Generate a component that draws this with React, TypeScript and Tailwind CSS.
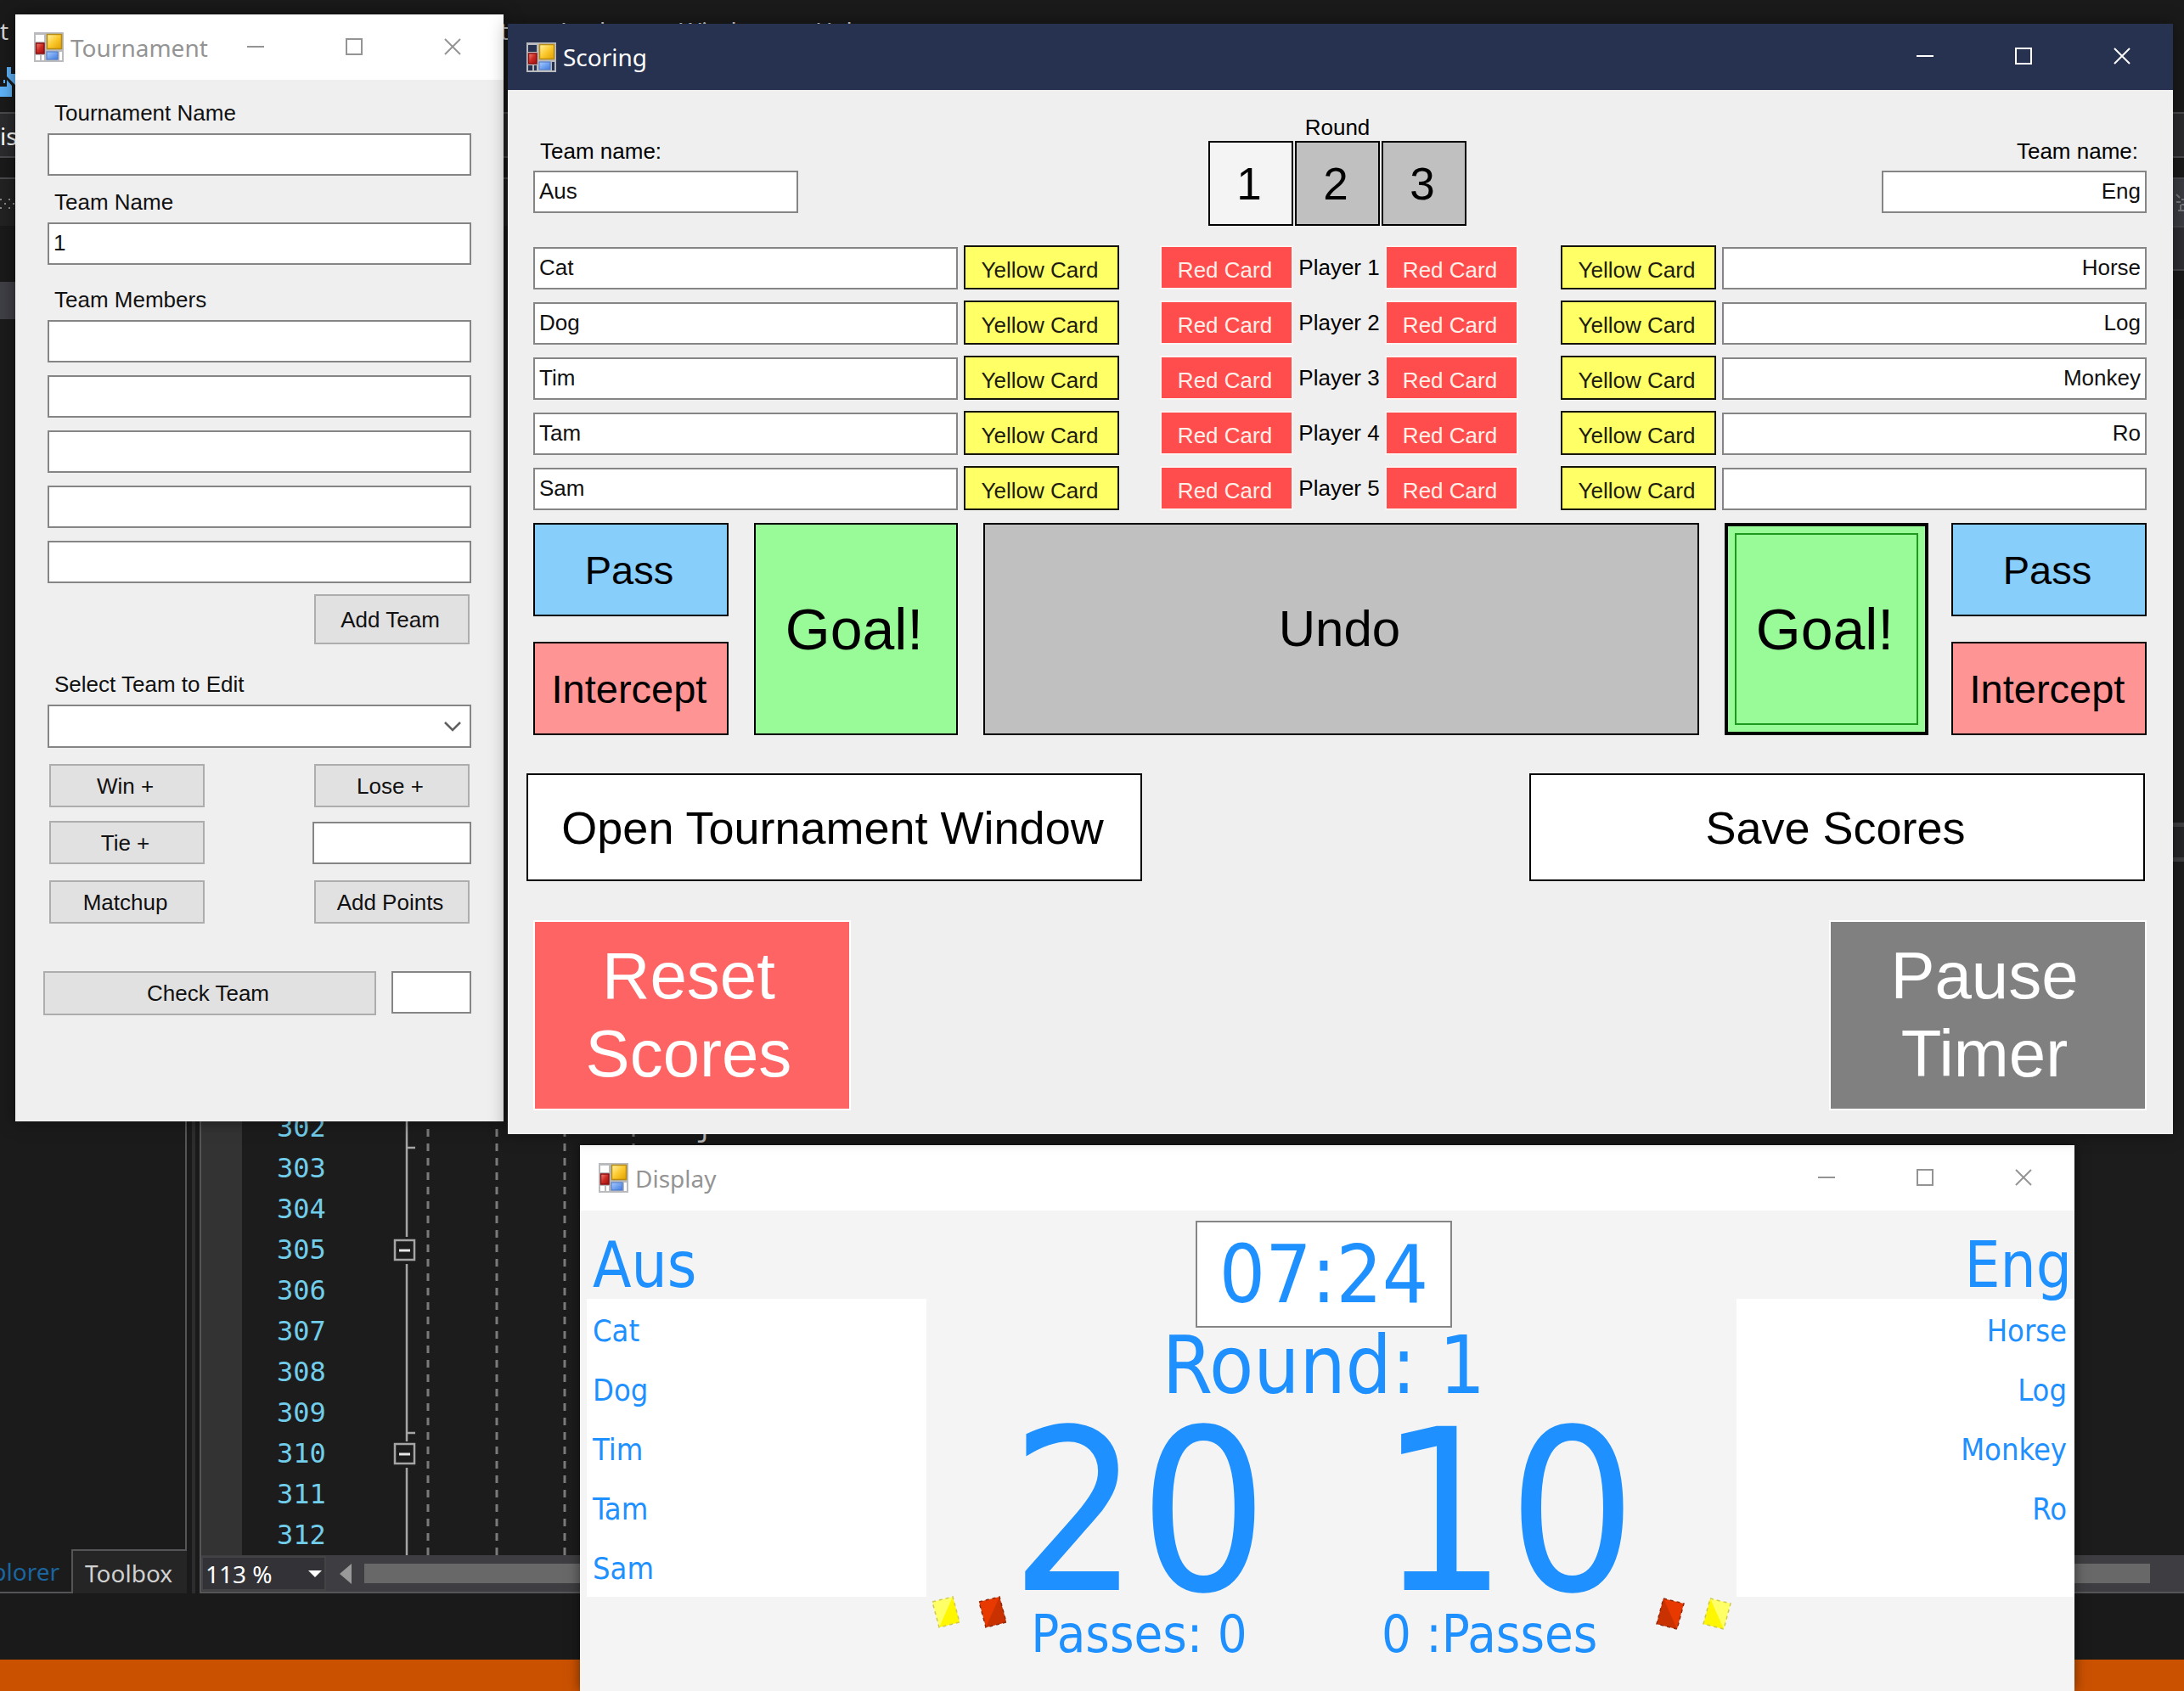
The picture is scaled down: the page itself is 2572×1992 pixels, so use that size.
import React from "react";

const UI = "font-['Liberation_Sans',Arial,sans-serif]";
const TITLE = "font-['Noto_Sans','Open_Sans',sans-serif]";
const BOARD = "font-['DejaVu_Sans_Condensed','Noto_Sans',sans-serif]";

/* ---------- window chrome ---------- */

function FormIcon({ id, hole }: { id: string; hole: string }) {
  return (
    <svg viewBox="0 0 35 35" className="h-[35px] w-[35px] shrink-0" aria-hidden="true">
      <defs>
        <linearGradient id={`${id}-y`} x1="0" y1="0" x2="1" y2="1">
          <stop offset="0" stopColor="#fff3a8" />
          <stop offset="0.5" stopColor="#fbc92e" />
          <stop offset="1" stopColor="#e0a000" />
        </linearGradient>
        <linearGradient id={`${id}-r`} x1="0" y1="0" x2="1" y2="1">
          <stop offset="0" stopColor="#f28b80" />
          <stop offset="0.5" stopColor="#cc2a22" />
          <stop offset="1" stopColor="#9b0f0f" />
        </linearGradient>
        <linearGradient id={`${id}-b`} x1="0" y1="0" x2="1" y2="1">
          <stop offset="0" stopColor="#a9ccff" />
          <stop offset="1" stopColor="#3f7be0" />
        </linearGradient>
      </defs>
      <rect width="35" height="35" fill="#b9bbbf" />
      <rect x="2" y="3" width="10" height="8" fill={hole} />
      <rect x="2" y="27" width="5" height="6" fill={hole} />
      <rect x="9" y="27" width="3" height="6" fill={hole} />
      <rect x="30" y="23" width="3" height="10" fill={hole} />
      <rect x="15.5" y="2.5" width="17" height="17" fill={`url(#${id}-y)`} stroke="#b88a10" strokeWidth="1.5" />
      <rect x="2.5" y="13" width="9.5" height="12" fill={`url(#${id}-r)`} stroke="#8d1010" strokeWidth="1.5" />
      <rect x="15" y="23" width="13" height="9" fill={`url(#${id}-b)`} stroke="#4a78c8" strokeWidth="1" />
    </svg>
  );
}

function CaptionButton({ label, d }: { label: string; d: string }) {
  return (
    <button aria-label={label} className="flex h-[75px] w-[116px] items-center justify-center">
      <svg viewBox="0 0 20 20" className="h-5 w-5" fill="none" stroke="currentColor" strokeWidth="2" aria-hidden="true">
        <path d={d} />
      </svg>
    </button>
  );
}

function TitleBar({ id, title, active = false }: { id: string; title: string; active?: boolean }) {
  return (
    <header
      className={
        active
          ? "flex h-[78px] items-center bg-[#26324f] pl-[22px] pr-0.5 text-white"
          : "flex h-[77px] items-center bg-white pl-[22px] pr-0.5 text-[#949494]"
      }
    >
      <FormIcon id={id} hole={active ? "#26324f" : "#ffffff"} />
      <h2 className={`${TITLE} min-w-0 flex-1 whitespace-nowrap pl-2 text-[28px] leading-9`}>{title}</h2>
      <div className="flex h-full items-start">
        <CaptionButton label="Minimize" d="M0 10H20" />
        <CaptionButton label="Maximize" d="M1 1H19V19H1Z" />
        <CaptionButton label="Close" d="M1 1L19 19M19 1L1 19" />
      </div>
    </header>
  );
}

/* ---------- form controls ---------- */

function Box({ label, id, value = "", className = "" }: { label?: string; id?: string; value?: string; className?: string }) {
  return (
    <input
      id={id}
      aria-label={label}
      type="text"
      defaultValue={value}
      className={`h-[50px] min-w-0 border-2 border-[#858585] bg-white px-[5px] pb-0.5 text-[26px] text-[#111] outline-none ${className}`}
    />
  );
}

function GrayButton({ children, className = "" }: { children: React.ReactNode; className?: string }) {
  return (
    <button className={`border-2 border-[#adadad] bg-[#e1e1e1] pr-1 text-[26px] leading-8 text-[#111] ${className}`}>
      {children}
    </button>
  );
}

/* ---------- Tournament ---------- */

function Tournament() {
  return (
    <section className="absolute left-[18px] top-[17px] z-10 w-[575px] bg-[#efefef] shadow-[0_0_18px_rgba(0,0,0,0.5)]">
      <TitleBar id="tour" title="Tournament" />
      <form className={`${UI} flex flex-col pb-[125px] pl-[33px] pr-[38px] pt-[23px] text-[26px] leading-8 text-[#111]`}>
        <div className="flex flex-col pl-[5px]">
          <label htmlFor="tname" className="pl-2">Tournament Name</label>
          <Box id="tname" className="mt-2" />
          <label htmlFor="team" className="mt-[15px] pl-2">Team Name</label>
          <Box id="team" value="1" className="mt-2" />
          <h3 className="mt-[25px] pl-2">Team Members</h3>
          <div className="mt-2 flex flex-col gap-[15px]">
            {[1, 2, 3, 4, 5].map((n) => (
              <Box key={n} label={`Team member ${n}`} />
            ))}
          </div>
          <GrayButton className="mr-0.5 mt-[13px] h-[59px] w-[183px] self-end">Add Team</GrayButton>
          <label htmlFor="edit" className="mt-[31px] pl-2">Select Team to Edit</label>
          <div className="relative mt-2">
            <select id="edit" className="block h-[51px] w-full appearance-none border-2 border-[#858585] bg-white px-2 outline-none" />
            <svg viewBox="0 0 20 12" className="pointer-events-none absolute right-3 top-5 h-3 w-5" fill="none" stroke="#606060" strokeWidth="2.5" aria-hidden="true">
              <path d="M1 1L10 10L19 1" />
            </svg>
          </div>
          <div className="mt-[19px] flex justify-between px-0.5">
            <GrayButton className="h-[51px] w-[183px]">Win +</GrayButton>
            <GrayButton className="h-[51px] w-[183px]">Lose +</GrayButton>
          </div>
          <div className="mt-4 flex items-end justify-between pl-0.5">
            <GrayButton className="h-[51px] w-[183px]">Tie +</GrayButton>
            <Box label="Points" className="w-[187px]" />
          </div>
          <div className="mt-[19px] flex justify-between px-0.5">
            <GrayButton className="h-[51px] w-[183px]">Matchup</GrayButton>
            <GrayButton className="h-[51px] w-[183px]">Add Points</GrayButton>
          </div>
        </div>
        <div className="mt-14 flex items-start gap-[18px]">
          <GrayButton className="h-[52px] flex-1">Check Team</GrayButton>
          <Box label="Check result" className="w-[94px]" />
        </div>
      </form>
    </section>
  );
}

/* ---------- Scoring ---------- */

const PLAYERS = [
  ["Cat", "Horse"],
  ["Dog", "Log"],
  ["Tim", "Monkey"],
  ["Tam", "Ro"],
  ["Sam", ""],
];

function Card({ kind }: { kind: "Yellow" | "Red" }) {
  return (
    <button
      className={
        kind === "Yellow"
          ? "h-[52px] w-[183px] border-2 border-[#15150a] bg-[#ffff66] pr-1 pt-1.5 text-[#1c1c10]"
          : "h-[52px] w-[157px] border-2 border-[#fcf4f2] bg-[#ff4d4d] pr-1 pt-1.5 text-[#fff0ea]"
      }
    >
      {kind} Card
    </button>
  );
}

function PassColumn() {
  return (
    <div className="flex w-[230px] flex-col justify-between text-[47px] leading-none">
      <button className="h-[110px] border-2 border-black bg-[#87cefa] pr-1">Pass</button>
      <button className="h-[110px] border-2 border-black bg-[#ff9494] pr-1">Intercept</button>
    </div>
  );
}

function Scoring() {
  return (
    <section className="absolute left-[598px] right-[13px] top-7 z-30 bg-[#efefef] shadow-[0_0_20px_rgba(0,0,0,0.4)]">
      <TitleBar id="score" title="Scoring" active />
      <div className={`${UI} pb-7 pl-[30px] pr-[31px] pt-7 text-[26px] leading-8 text-black`}>
        <div className="grid grid-cols-[1fr_auto_1fr]">
          <div className="flex flex-col items-start pt-7">
            <label htmlFor="left-team" className="pl-2">Team name:</label>
            <Box id="left-team" value="Aus" className="mt-[7px] w-[312px]" />
          </div>
          <div className="pr-1.5">
            <h3 className="text-center">Round</h3>
            <div className="flex gap-0.5 text-[53px] leading-none">
              <button className="h-[100px] w-[100px] border-2 border-black bg-[#f4f4f4] pr-1">1</button>
              <button className="h-[100px] w-[100px] border-2 border-black bg-[#c0c0c0] pr-1">2</button>
              <button className="h-[100px] w-[100px] border-2 border-black bg-[#c0c0c0] pr-1">3</button>
            </div>
          </div>
          <div className="flex flex-col items-end pt-7">
            <label htmlFor="right-team" className="pr-2.5">Team name:</label>
            <Box id="right-team" value="Eng" className="mt-[7px] w-[312px] text-right" />
          </div>
        </div>

        <div className="mt-[23px] flex flex-col gap-[13px]">
          {PLAYERS.map(([left, right], i) => (
            <div key={i} className="flex items-end">
              <Box label={`Left player ${i + 1}`} value={left} className="mr-[7px] flex-1" />
              <Card kind="Yellow" />
              <div className="flex pl-12 pr-[50px]">
                <Card kind="Red" />
                <span className="w-[108px] self-center text-center">Player {i + 1}</span>
                <Card kind="Red" />
              </div>
              <Card kind="Yellow" />
              <Box label={`Right player ${i + 1}`} value={right} className="ml-[7px] flex-1 text-right" />
            </div>
          ))}
        </div>

        <div className="mt-[15px] flex h-[250px] gap-[30px]">
          <PassColumn />
          <button className="w-[240px] border-2 border-black bg-[#98fb98] pr-1 text-[68px]">Goal!</button>
          <button className="flex-1 border-2 border-black bg-[#c0c0c0] pr-1 text-[60px]">Undo</button>
          <button className="-mr-[3px] w-[240px] border-4 border-black bg-[#98fb98] p-2 text-[68px]">
            <span className="flex h-full items-center justify-center border-2 border-[#1d9a1d] pr-1">Goal!</span>
          </button>
          <PassColumn />
        </div>

        <div className="-ml-2 mr-0.5 mt-[45px] flex justify-between text-[54px]">
          <button className="h-[127px] w-[725px] border-2 border-black bg-white pr-1">Open Tournament Window</button>
          <button className="h-[127px] w-[725px] border-2 border-black bg-white pr-1">Save Scores</button>
        </div>

        <div className="mt-[46px] flex justify-between text-[78px] leading-[92px] text-white">
          <button className="h-[224px] w-[374px] border-2 border-white bg-[#ff6464] pb-0.5 pl-8 pr-10">Reset Scores</button>
          <button className="h-[224px] w-[374px] border-2 border-white bg-[#808080] pb-0.5 pl-8 pr-10">Pause Timer</button>
        </div>
      </div>
    </section>
  );
}

/* ---------- Display ---------- */

function CardIcon({ color, mirrored = false }: { color: "yellow" | "red"; mirrored?: boolean }) {
  const [light, dark, edge] = color === "yellow" ? ["#ffff66", "#fff700", "#cfc850"] : ["#e83a00", "#c93200", "#8f2a10"];
  const outline = mirrored ? "M10 2L34 8L26 38L2 32Z" : "M2 8L26 2L34 32L10 38Z";
  const shade = mirrored ? "M10 2L2 32L26 38Z" : "M26 2L34 32L10 38Z";
  return (
    <svg viewBox="0 0 36 40" className="h-10 w-9" aria-hidden="true">
      <path d={outline} fill={light} />
      <path d={shade} fill={dark} />
      <path d={outline} fill="none" stroke={edge} strokeWidth="1.5" strokeDasharray="4 4" />
    </svg>
  );
}

function Roster({ names, right = false }: { names: string[]; right?: boolean }) {
  return (
    <ul className={`h-[351px] bg-white pl-[7px] pr-[9px] pt-[3px] text-[36px] leading-[70px] ${right ? "text-right" : ""}`}>
      {names.filter(Boolean).map((n) => (
        <li key={n} className="h-[70px]">{n}</li>
      ))}
    </ul>
  );
}

function Display() {
  return (
    <section className="absolute bottom-0 left-[683px] right-[129px] top-[1349px] z-20 overflow-hidden bg-[#f4f4f4] shadow-[0_0_14px_rgba(0,0,0,0.5)]">
      <TitleBar id="disp" title="Display" />
      <div className={`${BOARD} flex items-start pl-2 text-[#1e90ff]`}>
        <div className="w-[400px] pt-6">
          <h3 className="pl-[7px] text-[74px] leading-[80px]">Aus</h3>
          <Roster names={PLAYERS.map((p) => p[0])} />
        </div>
        <div className="flex flex-1 items-end px-[5px]">
          <div className="mb-[30px] flex w-[91px] justify-between">
            <CardIcon color="yellow" />
            <CardIcon color="red" />
          </div>
          <div className="flex flex-1 flex-col items-center pr-[18px] pt-3">
            <time className="flex h-[126px] w-[302px] items-center justify-center border-2 border-[#858585] bg-white text-[95px] leading-none">
              07:24
            </time>
            <p className="whitespace-nowrap text-[95px] leading-[88px]">Round: 1</p>
            <div className="mt-[9px] grid grid-cols-[305px_305px] gap-x-[130px]">
              <strong className="text-center text-[265px] font-normal leading-[240px]">20</strong>
              <strong className="text-[265px] font-normal leading-[240px]">10</strong>
              <span className="whitespace-nowrap text-center text-[61px] leading-[48px]">Passes: 0</span>
              <span className="whitespace-nowrap pl-[3px] text-[61px] leading-[48px]">0 :Passes</span>
            </div>
          </div>
          <div className="mb-7 flex w-[91px] justify-between">
            <CardIcon color="red" mirrored />
            <CardIcon color="yellow" mirrored />
          </div>
        </div>
        <div className="w-[398px] pt-6">
          <h3 className="pr-[3px] text-right text-[74px] leading-[80px]">Eng</h3>
          <Roster names={PLAYERS.map((p) => p[1])} right />
        </div>
      </div>
    </section>
  );
}

/* ---------- code editor behind the windows ---------- */

const LINES = [302, 303, 304, 305, 306, 307, 308, 309, 310, 311, 312];

function FoldMargin() {
  return (
    <svg viewBox="0 0 300 532" className="h-[532px] w-[300px] shrink-0" fill="none" aria-hidden="true">
      <g stroke="#a5a5a5" strokeWidth="2.5">
        <path d="M20 0V157M20 189V398M20 429V532M20 52H30M20 388H30" />
        <rect x="6" y="161" width="23" height="23" />
        <rect x="6" y="401" width="23" height="23" />
      </g>
      <path d="M11 173H24M11 413H24" stroke="#e6e6e6" strokeWidth="3" />
      <path d="M45 30V532M126 30V532M206 30V532M287 30V532" stroke="#7a7a7a" strokeWidth="3" strokeDasharray="9 8" />
    </svg>
  );
}

function Editor() {
  return (
    <div className={`${TITLE} flex h-screen flex-col overflow-hidden bg-[#1a1a1a] text-[28px] leading-9 text-[#d6d6d6]`}>
      <nav className="flex h-[76px] shrink-0 items-start pt-[18px]">
        <span className="w-[546px]">t</span>
        <span className="w-[109px]">Test</span>
        <span className="w-[145px]">Analyze</span>
        <span className="w-[160px]">Window</span>
        <span>Help</span>
      </nav>
      <div className="h-14 shrink-0">
        <svg viewBox="0 0 18 40" className="h-10 w-[18px]" fill="#5eb2f7" aria-hidden="true">
          <path d="M8 3H13V11H18V24L8 14Z" />
          <path d="M0 26H8V18L14 25V38H0Z" />
          <path d="M4 18H6V22H4Z" />
        </svg>
      </div>
      <div className="h-[54px] shrink-0 border-y-2 border-[#4a4a4e] bg-[#2b2b2e] pt-2 text-white">is</div>
      <div className="h-[23px] shrink-0" />
      <div className="flex h-[57px] shrink-0 justify-between border-t-2 border-[#4a4a4e] bg-[#222223]">
        <svg viewBox="0 0 18 57" className="h-[57px] w-[18px]" fill="#8a8a8a" aria-hidden="true">
          <path d="M0 23h2v2h-2zM10 23h2v2h-2zM5 28h2v2h-2zM15 28h2v2h-2zM0 33h2v2h-2zM10 33h2v2h-2z" />
        </svg>
        <div className="w-[13px] bg-[#3b3b43]">
          <svg viewBox="0 0 13 57" className="h-[57px] w-[13px]" fill="none" stroke="#77777d" strokeWidth="2" aria-hidden="true">
            <path d="M4 18l4 4M4 27h5M10 24h3M10 30h3M6 37h7M9 30v7" />
          </svg>
        </div>
      </div>
      <div className="flex h-[66px] shrink-0 justify-end">
        <div className="h-[53px] w-[13px] border-b-2 border-t-2 border-[#46464a] bg-[#2e2e33]" />
      </div>
      <div className="flex h-11 shrink-0">
        <div className="w-[220px] bg-[#3f3f46]" />
      </div>

      <div className="flex min-h-0 flex-1">
        <div className="flex w-[220px] flex-col justify-end bg-[#1b1b1c]">
          <div className="flex-1 border-r-2 border-[#555558]" />
          <div className="flex h-[52px] shrink-0">
            <a href="#explorer" className="flex w-[84px] justify-end overflow-hidden whitespace-nowrap border-b-2 border-[#555558] pr-3.5 pt-2 text-[#1b659f]">
              Solution Explorer
            </a>
            <a href="#toolbox" className="flex-1 border-l-2 border-t-2 border-[#555558] bg-[#252526] pl-3.5 pt-2 text-[#d0d0d0]">
              Toolbox
            </a>
          </div>
        </div>
        <div className="ml-1.5 w-1 bg-[#2d2d2f]" />
        <div className="ml-[5px] flex min-w-0 flex-1 flex-col border-l-2 border-[#555558]">
          <div className="flex min-h-0 flex-1 items-end overflow-hidden bg-[#1c1c1c]">
            <div className="w-12 self-stretch bg-[#333333]" />
            <ol className="w-[174px] pl-[41px] font-['DejaVu_Sans_Mono',monospace] text-[32px] leading-[48px] text-[#72cdea]">
              {LINES.map((n) => (
                <li key={n}>{n}</li>
              ))}
            </ol>
            <FoldMargin />
            <code className="h-[528px] pl-[60px] font-['DejaVu_Sans_Mono',monospace] text-[32px] leading-[48px] text-[#dcdcdc]">j</code>
          </div>
          <div className="flex h-[45px] shrink-0 items-center border-b-2 border-[#555558] bg-[#3e3e42]">
            <button className="flex h-[41px] w-[147px] items-center justify-between border-2 border-[#434346] bg-[#333337] px-[3px] text-[28px] text-white">
              113 %
              <svg viewBox="0 0 16 8" className="h-2 w-4" fill="#fff" aria-hidden="true">
                <path d="M0 0H16L8 8Z" />
              </svg>
            </button>
            <svg viewBox="0 0 14 24" className="ml-4 h-6 w-3.5" fill="#999" aria-hidden="true">
              <path d="M14 0V24L0 12Z" />
            </svg>
            <div className="ml-[15px] mr-10 h-[23px] flex-1 bg-[#686868]" />
          </div>
        </div>
      </div>
      <div className="h-[78px] shrink-0" />
      <footer className="h-[37px] shrink-0 bg-[#ca5100]" />
    </div>
  );
}

function SplitHandle() {
  return <div className="absolute right-0 top-[969px] h-[46px] w-[13px] border-y-[5px] border-[#3f3f42] bg-[#252528]" />;
}

export default function App() {
  return (
    <main className="relative min-h-screen overflow-hidden bg-[#1a1a1a]">
      <Editor />
      <SplitHandle />
      <Tournament />
      <Display />
      <Scoring />
    </main>
  );
}
